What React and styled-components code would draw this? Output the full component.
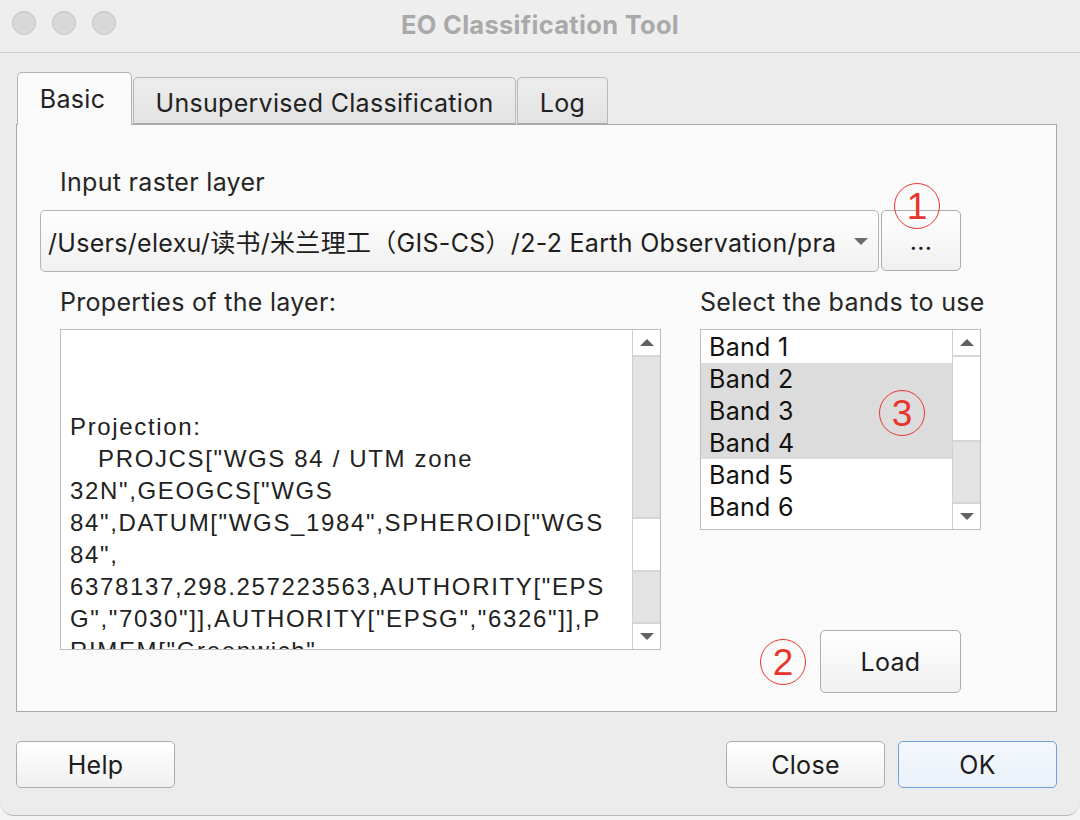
import React from "react";
import styled, { createGlobalStyle } from "styled-components";

const GlobalStyle = createGlobalStyle`
  html, body { margin: 0; padding: 0; background: #f3f3f3; }
  body { font-family: Inter, "Liberation Sans", "Noto Sans CJK SC", sans-serif; color: #1e1e1e; }
  * { box-sizing: border-box; }
`;

const Window = styled.div`
  width: 1080px;
  height: 816px;
  background: #ececec;
  border-bottom: 1px solid #b9b9b9;
  border-radius: 0 0 14px 14px;
  display: flex;
  flex-direction: column;
  overflow: hidden;
`;

const TitleBar = styled.div`
  height: 53px;
  flex: none;
  background: #efeeef;
  border-bottom: 1px solid #cdcdcd;
  display: grid;
  grid-template-columns: 1fr auto 1fr;
  align-items: center;
  padding: 0 12px;
`;

const Lights = styled.div`
  display: flex;
  gap: 16px;
  align-self: start;
  margin-top: 11px;
`;

const Light = styled.span`
  width: 24px;
  height: 24px;
  border-radius: 50%;
  background: #d8d8d8;
  border: 1px solid #c3c3c3;
`;

const Title = styled.div`
  font-size: 25.5px;
  font-weight: 700;
  color: #a9a9a9;
  letter-spacing: 0.3px;
  margin-top: -4px;
`;

const Body = styled.div`
  padding: 19px 23px 0 16px;
  display: flex;
  flex-direction: column;
`;

const TabRow = styled.div`
  display: flex;
  align-items: flex-end;
  height: 52px;
  padding-left: 1px;
  position: relative;
  z-index: 1;
`;

const Tab = styled.div`
  width: ${(p) => p.$w}px;
  height: ${(p) => (p.$active ? "53px" : "47px")};
  margin-bottom: ${(p) => (p.$active ? "-1px" : "0")};
  font-size: 25px;
  letter-spacing: 0.3px;
  display: flex;
  align-items: center;
  justify-content: center;
  padding-top: ${(p) => (p.$active ? "0" : "4px")};
  padding-right: ${(p) => (p.$active ? "4px" : "0")};
  color: #222;
  background: ${(p) => (p.$active ? "#fafafa" : "linear-gradient(#ededed, #e3e3e3)")};
  border: 1px solid ${(p) => (p.$active ? "#b3b3b3" : "#b8b8b8")};
  border-bottom: ${(p) => (p.$active ? "none" : "1px solid #aaa")};
  border-radius: 5px 5px 0 0;
  margin-right: 1px;
`;

const Pane = styled.div`
  height: 588px;
  background: #fafafa;
  border: 1px solid #a9a9a9;
  padding: 43px 0 0 23px;
  display: flex;
  flex-direction: column;
`;

const Label = styled.div`
  font-size: 25px;
  letter-spacing: 0.3px;
  line-height: 28px;
  color: #262626;
  white-space: nowrap;
  padding-left: ${(p) => p.$indent || 0}px;
`;

const ComboRow = styled.div`
  display: flex;
  gap: 2px;
  margin-top: 14px;
  height: 62px;
  position: relative;
`;

const Combo = styled.div`
  width: 839px;
  height: 62px;
  border: 1px solid #b4b4b4;
  border-radius: 5px;
  background: linear-gradient(#ffffff, #f0f0f0);
  display: flex;
  align-items: center;
  padding: 0 10px 0 7px;
  gap: 12px;
`;

const ComboText = styled.span`
  flex: 1;
  font-size: 25px;
  letter-spacing: 0.3px;
  white-space: nowrap;
  overflow: hidden;
  color: #1e1e1e;
  font-family: Inter, "Noto Sans CJK SC", sans-serif;
`;

const Caret = styled.span`
  width: 0;
  height: 0;
  border-left: 7px solid transparent;
  border-right: 7px solid transparent;
  border-top: 7px solid #6b6b6b;
  flex: none;
`;

const Button = styled.button`
  width: ${(p) => p.$w}px;
  height: ${(p) => p.$h}px;
  border: 1px solid ${(p) => (p.$primary ? "#6fa0d8" : "#adadad")};
  border-radius: 5px;
  background: ${(p) => (p.$primary ? "linear-gradient(#f4f8fd, #eaf1fa)" : "linear-gradient(#ffffff, #f0f0f0)")};
  font-family: Inter, "Liberation Sans", sans-serif;
  font-size: 25px;
  letter-spacing: 0.3px;
  color: #1c1c1c;
  padding: 0;
  display: flex;
  align-items: center;
  justify-content: center;
  flex: none;
`;

const Annot = styled.span`
  width: 46px;
  height: 46px;
  border-radius: 50%;
  border: 1.6px solid #e8352b;
  color: #e8352b;
  font-family: "Liberation Sans", sans-serif;
  font-size: 37px;
  line-height: 1;
  display: flex;
  align-items: center;
  justify-content: center;
  padding-top: 1px;
  flex: none;
  ${(p) => (p.$float ? `position: absolute; left: ${p.$x}px; top: ${p.$y}px;` : "")}
`;

const Columns = styled.div`
  display: flex;
  gap: 39px;
  padding-left: 20px;
  margin-top: 16px;
`;

const LeftCol = styled.div`
  width: 601px;
  display: flex;
  flex-direction: column;
  gap: 13px;
`;

const RightCol = styled.div`
  width: 290px;
  display: flex;
  flex-direction: column;
  gap: 13px;
`;

const ScrollBox = styled.div`
  width: ${(p) => p.$w}px;
  height: ${(p) => p.$h}px;
  border: 1px solid #bdbdbd;
  background: #fff;
  display: flex;
  position: relative;
`;

const TextContent = styled.div`
  flex: 1;
  overflow: hidden;
  padding: 81px 0 0 9px;
  font-size: 24px;
  line-height: 32px;
  color: #222;
  font-family: "Liberation Sans", sans-serif;
  letter-spacing: 1.65px;
`;

const TextLine = styled.div`
  white-space: pre;
  padding-left: ${(p) => p.$indent || 0}px;
`;

const ListContent = styled.div`
  flex: 1;
  padding-top: 1px;
  overflow: hidden;
`;

const Item = styled.div`
  height: 32px;
  line-height: 32px;
  padding-left: 8px;
  font-size: 25px;
  letter-spacing: 0.3px;
  color: #111;
  background: ${(p) => (p.$selected ? "#dcdcdc" : "transparent")};
`;

const ScrollBar = styled.div`
  width: 28px;
  flex: none;
  border-left: 1px solid #d0d0d0;
  display: flex;
  flex-direction: column;
`;

const Arrow = styled.div`
  height: 27px;
  flex: none;
  display: flex;
  align-items: center;
  justify-content: center;
  background: #fff;
  border-${(p) => (p.$down ? "top" : "bottom")}: 2px solid #d6d6d6;
  &::after {
    content: "";
    border-left: 7px solid transparent;
    border-right: 7px solid transparent;
    border-${(p) => (p.$down ? "top" : "bottom")}: 7px solid #606060;
  }
`;

const Track = styled.div`
  height: ${(p) => p.$h}px;
  flex: ${(p) => (p.$h ? "none" : "1")};
  background: ${(p) => (p.$fill ? "#e3e3e3" : "#ffffff")};
  border-bottom: ${(p) => (p.$line ? "2px solid #d6d6d6" : "none")};
`;

const LoadRow = styled.div`
  display: flex;
  align-items: center;
  gap: 14px;
  padding-left: 60px;
  margin-top: 87px;
`;

const Footer = styled.div`
  display: flex;
  align-items: center;
  margin-top: 29px;
  gap: 13px;
`;

const Spacer = styled.div`
  flex: 1;
`;

const projection = [
  ["Projection:", 0],
  ["PROJCS[\"WGS 84 / UTM zone", 28],
  ["32N\",GEOGCS[\"WGS", 0],
  ["84\",DATUM[\"WGS_1984\",SPHEROID[\"WGS", 0],
  ["84\",", 0],
  ["6378137,298.257223563,AUTHORITY[\"EPS", 0],
  ["G\",\"7030\"]],AUTHORITY[\"EPSG\",\"6326\"]],P", 0],
  ["RIMEM[\"Greenwich\",", 0],
];

const bands = [1, 2, 3, 4, 5, 6, 7];

export default function App() {
  return (
    <>
      <GlobalStyle />
      <Window>
        <TitleBar>
          <Lights>
            <Light />
            <Light />
            <Light />
          </Lights>
          <Title>EO Classification Tool</Title>
          <div />
        </TitleBar>
        <Body>
          <TabRow>
            <Tab $active $w={115}>Basic</Tab>
            <Tab $w={383}>Unsupervised Classification</Tab>
            <Tab $w={91}>Log</Tab>
          </TabRow>
          <Pane>
            <Label $indent={20}>Input raster layer</Label>
            <ComboRow>
              <Combo>
                <ComboText>/Users/elexu/读书/米兰理工（GIS-CS）/2-2 Earth Observation/pra</ComboText>
                <Caret />
              </Combo>
              <Button $w={80} $h={61}>...</Button>
              <Annot $float $x={854} $y={-27}>1</Annot>
            </ComboRow>
            <Columns>
              <LeftCol>
                <Label>Properties of the layer:</Label>
                <ScrollBox $w={601} $h={321}>
                  <TextContent>
                    {projection.map(([l, ind], i) => (
                      <TextLine key={i} $indent={ind}>{l}</TextLine>
                    ))}
                  </TextContent>
                  <ScrollBar>
                    <Arrow />
                    <Track $h={162} $fill $line />
                    <Track $h={53} $line />
                    <Track $fill />
                    <Arrow $down />
                  </ScrollBar>
                </ScrollBox>
              </LeftCol>
              <RightCol>
                <Label>Select the bands to use</Label>
                <ScrollBox $w={281} $h={201}>
                  <ListContent>
                    {bands.map((b) => (
                      <Item key={b} $selected={b >= 2 && b <= 4}>
                        Band {b}
                      </Item>
                    ))}
                  </ListContent>
                  <ScrollBar>
                    <Arrow />
                    <Track $h={85} $line />
                    <Track $fill />
                    <Arrow $down />
                  </ScrollBar>
                  <Annot $float $x={178} $y={60}>3</Annot>
                </ScrollBox>
                <LoadRow>
                  <Annot>2</Annot>
                  <Button $w={141} $h={63}>Load</Button>
                </LoadRow>
              </RightCol>
            </Columns>
          </Pane>
          <Footer>
            <Button $w={159} $h={47}>Help</Button>
            <Spacer />
            <Button $w={159} $h={47}>Close</Button>
            <Button $w={159} $h={47} $primary>OK</Button>
          </Footer>
        </Body>
      </Window>
    </>
  );
}
